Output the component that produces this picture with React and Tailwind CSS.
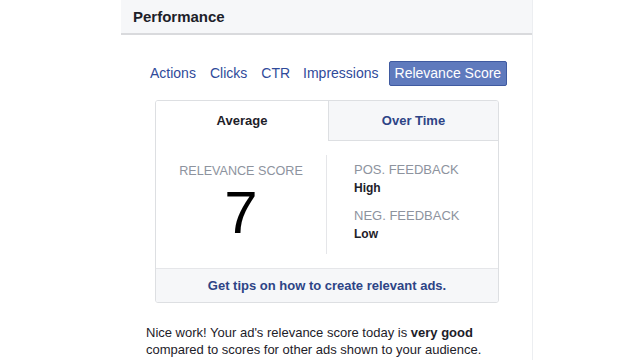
export default function App() {
  return (
    <div className="w-[640px] h-[360px] bg-white overflow-hidden relative" style={{ fontFamily: '"Liberation Sans", Arial, sans-serif' }}>
      <div className="ml-[121px] w-[412px] h-[360px] border-r border-[#eceef1] flex flex-col">
        <div className="h-[35px] bg-[#f6f7f9] border-b-2 border-[#d9dadd] flex items-center pl-[12px] pt-[2px]">
          <span className="text-[15px] font-bold text-[#1d2129]">Performance</span>
        </div>
        <div className="flex items-center mt-[26px] pl-[29px] text-[14px] text-[#2f4a9a]">
          <span className="mr-[14px]">Actions</span>
          <span className="mr-[14px]">Clicks</span>
          <span className="mr-[13px]">CTR</span>
          <span className="mr-[10px]">Impressions</span>
          <span className="h-[25px] px-[5px] flex items-center bg-[#5f7abd] border border-[#3f5aa0] rounded-[2px] text-white">Relevance Score</span>
        </div>
        <div className="ml-[34px] mt-[14px] w-[344px] h-[203px] border border-[#dddfe2] rounded-[3px] flex flex-col overflow-hidden">
          <div className="flex h-[40px]">
            <div className="w-[172px] flex items-center justify-center text-[13px] font-bold text-[#1d2129] bg-white">Average</div>
            <div className="flex-1 flex items-center justify-center text-[13px] font-bold text-[#2d4486] bg-[#f6f7f9] border-l border-b border-[#dddfe2]">Over Time</div>
          </div>
          <div className="flex flex-1 pt-[14px] pb-[14px]">
            <div className="w-[170px] flex flex-col items-center">
              <span className="text-[12.6px] text-[#8d939e] mt-[7px]">RELEVANCE SCORE</span>
              <span className="text-[60px] leading-none text-black mt-[2px]">7</span>
            </div>
            <div className="w-px bg-[#e5e6e9]"></div>
            <div className="flex flex-col pl-[27px] pt-[7px]">
              <span className="text-[13px] text-[#8d939e] leading-[15px]">POS. FEEDBACK</span>
              <span className="text-[12px] font-bold text-[#1d2129] mt-[2px]">High</span>
              <span className="text-[13px] text-[#8d939e] leading-[15px] mt-[11px]">NEG. FEEDBACK</span>
              <span className="text-[12px] font-bold text-[#1d2129] mt-[2px]">Low</span>
            </div>
          </div>
          <div className="h-[34px] bg-[#f6f7f9] border-t border-[#e5e6e9] flex items-center justify-center text-[13px] font-bold text-[#2d4486]">
            Get tips on how to create relevant ads.
          </div>
        </div>
        <div className="ml-[25px] mt-[21px] text-[13px] leading-[17px] text-[#1d2129]">
          Nice work! Your ad's relevance score today is <b>very good</b><br />
          compared to scores for other ads shown to your audience.
        </div>
      </div>
    </div>
  );
}
